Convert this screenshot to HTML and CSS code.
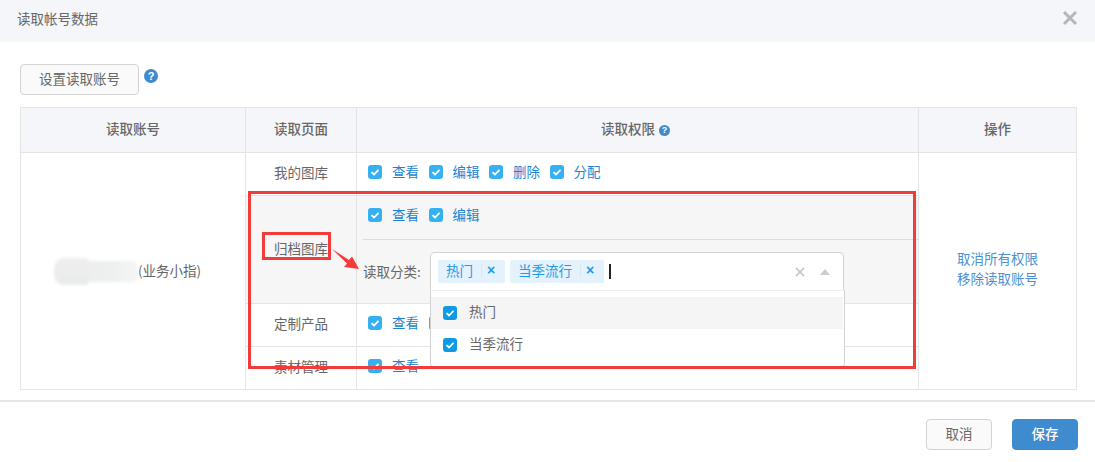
FILE: index.html
```html
<!DOCTYPE html>
<html lang="zh-CN">
<head>
<meta charset="utf-8">
<title>读取帐号数据</title>
<link rel="stylesheet" href="styles.css">
</head>
<body>
<div class="modal">
  <header class="modal-head">
    <span class="modal-title">读取帐号数据</span>
    <svg class="close" viewBox="0 0 16 16" width="16" height="16"><path d="M2 2 14 14M14 2 2 14" stroke="#b4b6b8" stroke-width="3" fill="none"/></svg>
  </header>
  <main class="modal-body">
    <div class="toolbar">
      <button class="btn btn-set">设置读取账号</button>
      <span class="help help-lg">?</span>
    </div>
    <table class="grid">
      <colgroup><col class="c1"><col class="c2"><col class="c3"><col class="c4"></colgroup>
      <thead>
        <tr><th>读取账号</th><th>读取页面</th><th class="th-perm">读取权限 <span class="help help-sm">?</span></th><th>操作</th></tr>
      </thead>
      <tbody>
        <tr class="row">
          <td rowspan="4" class="account"><span class="blur"></span><span class="acct-role">(业务小指)</span></td>
          <td class="page">我的图库</td>
          <td class="perm"><div class="checks">
            <label class="ck"><i class="box"><svg viewBox="0 0 14 14"><path d="M3.5 7.2 6 9.5 10.5 4.8" /></svg></i>查看</label>
            <label class="ck"><i class="box"><svg viewBox="0 0 14 14"><path d="M3.5 7.2 6 9.5 10.5 4.8" /></svg></i>编辑</label>
            <label class="ck"><i class="box"><svg viewBox="0 0 14 14"><path d="M3.5 7.2 6 9.5 10.5 4.8" /></svg></i>删除</label>
            <label class="ck"><i class="box"><svg viewBox="0 0 14 14"><path d="M3.5 7.2 6 9.5 10.5 4.8" /></svg></i>分配</label>
          </div></td>
          <td rowspan="4" class="ops"><a>取消所有权限</a><a>移除读取账号</a></td>
        </tr>
        <tr class="row-active">
          <td class="page shade">归档图库</td>
          <td class="perm shade">
            <div class="checks checks-top">
              <label class="ck"><i class="box"><svg viewBox="0 0 14 14"><path d="M3.5 7.2 6 9.5 10.5 4.8" /></svg></i>查看</label>
              <label class="ck"><i class="box"><svg viewBox="0 0 14 14"><path d="M3.5 7.2 6 9.5 10.5 4.8" /></svg></i>编辑</label>
            </div>
            <div class="category">
              <span class="cat-label">读取分类:</span>
              <div class="select">
                <span class="tag tag-a">热门<b class="tag-sep"></b><em>×</em></span>
                <span class="tag tag-b">当季流行<b class="tag-sep"></b><em>×</em></span>
                <span class="caret"></span>
                <span class="spacer"></span>
                <svg class="clear" viewBox="0 0 10 10" width="10" height="10"><path d="M1 1 9 9M9 1 1 9" stroke="#ccc" stroke-width="1.8" fill="none"/></svg>
                <span class="arrow-up"></span>
                <ul class="menu">
                  <li class="opt opt-hover"><i class="box box-dark"><svg viewBox="0 0 14 14"><path d="M3.5 7.2 6 9.5 10.5 4.8" /></svg></i>热门</li>
                  <li class="opt"><i class="box box-dark"><svg viewBox="0 0 14 14"><path d="M3.5 7.2 6 9.5 10.5 4.8" /></svg></i>当季流行</li>
                </ul>
              </div>
            </div>
          </td>
        </tr>
        <tr class="row">
          <td class="page">定制产品</td>
          <td class="perm"><div class="checks">
            <label class="ck"><i class="box"><svg viewBox="0 0 14 14"><path d="M3.5 7.2 6 9.5 10.5 4.8" /></svg></i>查看</label>
            <label class="ck"><i class="box"><svg viewBox="0 0 14 14"><path d="M3.5 7.2 6 9.5 10.5 4.8" /></svg></i></label>
          </div></td>
        </tr>
        <tr class="row">
          <td class="page">素材管理</td>
          <td class="perm"><div class="checks">
            <label class="ck"><i class="box"><svg viewBox="0 0 14 14"><path d="M3.5 7.2 6 9.5 10.5 4.8" /></svg></i>查看</label>
          </div></td>
        </tr>
      </tbody>
    </table>
  </main>
  <footer class="modal-foot">
    <button class="btn btn-cancel">取消</button>
    <button class="btn btn-save">保存</button>
  </footer>
  <div class="mark mark-big"></div>
  <div class="mark mark-small"></div>
  <svg class="mark-arrow" viewBox="0 0 28 22" width="28" height="22"><path d="M0 0 L17 11 L20 7.5 L27 20 L12 18 L15 14.5 Z" fill="#f23b3b"/></svg>
</div>
</body>
</html>
```
FILE: styles.css
```css
* { box-sizing: border-box; }
html, body { margin: 0; padding: 0; background: #fff; }
body {
  font-family: "Noto Sans CJK SC", "Liberation Sans", sans-serif;
  font-size: 13.5px;
  color: #666;
  overflow: hidden;
}
.modal { position: relative; width: 1095px; height: 462px; }

.modal-head {
  height: 42px;
  background: #f5f6fa;
  display: flex;
  align-items: center;
  justify-content: space-between;
  padding: 0 17px;
}
.modal-title { font-size: 13.5px; color: #666; margin-bottom: 7px; }
.close { margin-top: -7px; }

.modal-body { padding: 22px 18px 0 20px; height: 360px; border-bottom: 2px solid #e6e6e6; }
.toolbar { display: flex; align-items: flex-start; height: 43px; }

.btn {
  font: inherit;
  border-radius: 4px;
  border: 1px solid #d4d4d4;
  background: #fafafa;
  color: #666;
  padding: 0 0 4px;
  height: 31px;
  line-height: 24px;
}
.btn-set { width: 119px; }

.help {
  display: inline-flex;
  align-items: center;
  justify-content: center;
  border-radius: 50%;
  background: #3f8bd0;
  color: #fff;
  font-family: "Liberation Sans", sans-serif;
  font-weight: 700;
}
.help-lg { width: 14px; height: 14px; font-size: 11px; margin: 5px 0 0 5px; }
.help-sm { width: 11px; height: 11px; font-size: 9px; vertical-align: 1px; margin-left: 1px; }

.grid {
  border-collapse: collapse;
  table-layout: fixed;
  width: 1056px;
}
.c1 { width: 225px; }
.c2 { width: 111px; }
.c3 { width: 562px; }
.c4 { width: 158px; }
.grid th, .grid td {
  border: 1px solid #e4e4e4;
  padding: 0;
  text-align: center;
  font-weight: 400;
  line-height: 20px;
}
.grid th {
  height: 45px;
  background: #f5f6fa;
  font-weight: 500;
  color: #666;
  padding-bottom: 4px;
}
.grid th.th-perm { padding-right: 4px; }
.row td { height: 43px; }
.row-active td { height: 108px; }
.grid td.page { padding-bottom: 4px; }
.shade { background: #f6f6f6; }
.grid td.account { padding-right: 11px; }
.blur {
  display: inline-block;
  vertical-align: middle;
  width: 84px;
  height: 27px;
  border-radius: 10px;
  background:
    linear-gradient(#eeeeee, #e9ebeb) 0 0 / 34px 27px no-repeat,
    linear-gradient(90deg, #eceded 0, #eeefef 55%, #f6f6f6 100%) 32px 3px / 52px 21px no-repeat;
  filter: blur(1.5px);
}
.acct-role { vertical-align: middle; display: inline-block; padding-bottom: 3px; }

.grid td.perm { text-align: left; vertical-align: top; }
.checks { display: flex; align-items: center; height: 38px; padding-left: 11px; gap: 9.5px; }
.checks-top { height: 44px; margin-left: 6px; padding: 0 0 5px 5px; border-bottom: 1px solid #dcdcdc; }
.ck { display: inline-flex; align-items: center; color: #1b84cf; padding-bottom: 2px; }
.box {
  display: inline-block;
  width: 14px;
  height: 14px;
  border-radius: 3px;
  background: #35b0f2;
  margin: 2px 10px 0 0;
  flex: none;
}
.box svg { display: block; width: 14px; height: 14px; }
.box path { fill: none; stroke: #fff; stroke-width: 1.8; }
.box-dark { background: #0e9be6; margin: 4px 12px 0 0; }

.category { display: flex; align-items: flex-start; padding: 12px 0 0 6px; }
.cat-label { width: 68px; flex: none; margin-top: 9px; }
.select {
  position: relative;
  display: flex;
  align-items: center;
  width: 414px;
  height: 39px;
  margin-left: -1px;
  padding: 0 13px 0 7px;
  border: 1px solid #d2d2d2;
  border-bottom-color: #eee;
  border-radius: 5px 5px 0 0;
  background: #fff;
}
.tag {
  display: inline-flex;
  align-items: center;
  height: 23px;
  border-radius: 2px;
  background: #e3f2fd;
  color: #1e9be8;
  padding: 0 8px 3px;
  margin-right: 5px;
}
.tag-a { width: 67px; }
.tag-b { width: 94px; }
.tag em { font-style: normal; font-weight: 700; font-family: "Liberation Sans", sans-serif; font-size: 14px; }
.tag-sep { width: 1px; height: 13px; background: #d7e9f7; margin: 0 5px 0 8px; }
.caret { width: 2px; height: 15px; background: #222; }
.spacer { flex: 1; }
.clear { margin-right: 15px; }
.arrow-up {
  width: 0;
  height: 0;
  border-left: 5px solid transparent;
  border-right: 5px solid transparent;
  border-bottom: 6px solid #ccc;
}
.menu {
  position: absolute;
  left: -1px;
  top: 37px;
  width: 415px;
  height: 78px;
  margin: 0;
  padding: 6px 1px 0 0;
  list-style: none;
  background: #fff;
  border: 1px solid #d2d2d2;
  border-top-color: #eee;
  border-radius: 0 0 5px 5px;
  z-index: 2;
}
.opt { display: flex; align-items: center; height: 32px; padding: 0 0 4px 12px; color: #666; }
.opt-hover { background: #f5f5f5; }

.grid td.ops { padding-bottom: 6px; }
.ops a { display: block; color: #4a90d2; line-height: 20px; }

.modal-foot { display: flex; justify-content: flex-end; gap: 20px; padding: 17px 17px 0 0; }
.btn-cancel, .btn-save { width: 66px; }
.btn-save { background: #3f8bd0; border-color: #3f8bd0; color: #fff; font-weight: 500; }

.mark { position: absolute; border: 3px solid #f23b3b; z-index: 5; }
.mark-big { left: 248px; top: 191px; width: 668px; height: 178px; }
.mark-small { left: 262px; top: 232px; width: 69px; height: 28px; }
.mark-arrow { position: absolute; left: 332px; top: 249px; z-index: 5; }
```
